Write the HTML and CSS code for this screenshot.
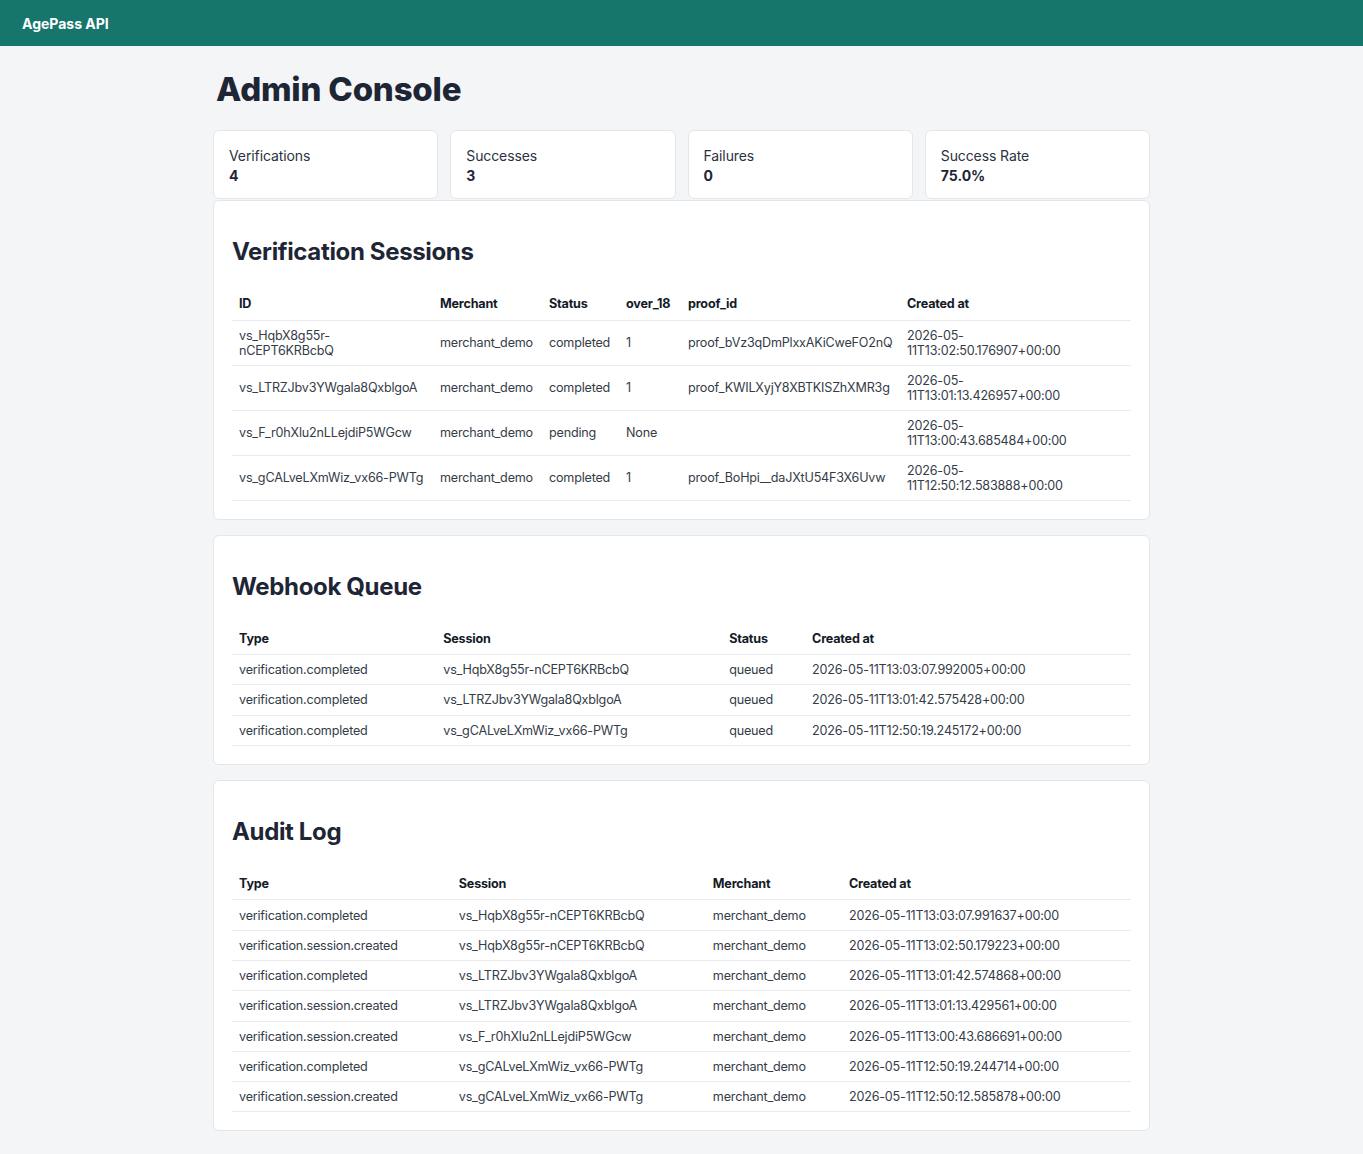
FILE: index.html
```html
<!DOCTYPE html>
<html lang="en">
<head>
<meta charset="utf-8">
<title>AgePass Admin Console</title>
<link rel="stylesheet" href="styles.css">
</head>
<body>
<header class="topbar"><span class="brand">AgePass API</span></header>
<main class="container">
  <h1 class="page-title">Admin Console</h1>
  <div class="stats">
    <div class="stat"><div class="stat-label">Verifications</div><div class="stat-value">4</div></div>
    <div class="stat"><div class="stat-label">Successes</div><div class="stat-value">3</div></div>
    <div class="stat"><div class="stat-label">Failures</div><div class="stat-value">0</div></div>
    <div class="stat"><div class="stat-label">Success Rate</div><div class="stat-value">75.0%</div></div>
  </div>

  <section class="panel panel-first">
    <h2>Verification Sessions</h2>
    <table class="data sessions">
      <colgroup>
        <col class="c-id"><col class="c-merchant"><col class="c-status"><col class="c-over"><col class="c-proof"><col>
      </colgroup>
      <thead><tr><th>ID</th><th>Merchant</th><th>Status</th><th>over_18</th><th>proof_id</th><th>Created at</th></tr></thead>
      <tbody>
        <tr><td>vs_HqbX8g55r-<br>nCEPT6KRBcbQ</td><td>merchant_demo</td><td>completed</td><td>1</td><td>proof_bVz3qDmPlxxAKiCweFO2nQ</td><td class="w-date">2026-05-11T13:02:50.176907+00:00</td></tr>
        <tr><td>vs_LTRZJbv3YWgala8QxblgoA</td><td>merchant_demo</td><td>completed</td><td>1</td><td>proof_KWILXyjY8XBTKISZhXMR3g</td><td class="w-date">2026-05-11T13:01:13.426957+00:00</td></tr>
        <tr><td>vs_F_r0hXlu2nLLejdiP5WGcw</td><td>merchant_demo</td><td>pending</td><td>None</td><td></td><td class="w-date">2026-05-11T13:00:43.685484+00:00</td></tr>
        <tr><td>vs_gCALveLXmWiz_vx66-PWTg</td><td>merchant_demo</td><td>completed</td><td>1</td><td>proof_BoHpi__daJXtU54F3X6Uvw</td><td class="w-date">2026-05-11T12:50:12.583888+00:00</td></tr>
      </tbody>
    </table>
  </section>

  <section class="panel">
    <h2>Webhook Queue</h2>
    <table class="data">
      <thead><tr><th>Type</th><th>Session</th><th>Status</th><th>Created at</th></tr></thead>
      <tbody>
        <tr><td>verification.completed</td><td>vs_HqbX8g55r-nCEPT6KRBcbQ</td><td>queued</td><td>2026-05-11T13:03:07.992005+00:00</td></tr>
        <tr><td>verification.completed</td><td>vs_LTRZJbv3YWgala8QxblgoA</td><td>queued</td><td>2026-05-11T13:01:42.575428+00:00</td></tr>
        <tr><td>verification.completed</td><td>vs_gCALveLXmWiz_vx66-PWTg</td><td>queued</td><td>2026-05-11T12:50:19.245172+00:00</td></tr>
      </tbody>
    </table>
  </section>

  <section class="panel">
    <h2>Audit Log</h2>
    <table class="data">
      <thead><tr><th>Type</th><th>Session</th><th>Merchant</th><th>Created at</th></tr></thead>
      <tbody>
        <tr><td>verification.completed</td><td>vs_HqbX8g55r-nCEPT6KRBcbQ</td><td>merchant_demo</td><td>2026-05-11T13:03:07.991637+00:00</td></tr>
        <tr><td>verification.session.created</td><td>vs_HqbX8g55r-nCEPT6KRBcbQ</td><td>merchant_demo</td><td>2026-05-11T13:02:50.179223+00:00</td></tr>
        <tr><td>verification.completed</td><td>vs_LTRZJbv3YWgala8QxblgoA</td><td>merchant_demo</td><td>2026-05-11T13:01:42.574868+00:00</td></tr>
        <tr><td>verification.session.created</td><td>vs_LTRZJbv3YWgala8QxblgoA</td><td>merchant_demo</td><td>2026-05-11T13:01:13.429561+00:00</td></tr>
        <tr><td>verification.session.created</td><td>vs_F_r0hXlu2nLLejdiP5WGcw</td><td>merchant_demo</td><td>2026-05-11T13:00:43.686691+00:00</td></tr>
        <tr><td>verification.completed</td><td>vs_gCALveLXmWiz_vx66-PWTg</td><td>merchant_demo</td><td>2026-05-11T12:50:19.244714+00:00</td></tr>
        <tr><td>verification.session.created</td><td>vs_gCALveLXmWiz_vx66-PWTg</td><td>merchant_demo</td><td>2026-05-11T12:50:12.585878+00:00</td></tr>
      </tbody>
    </table>
  </section>
</main>
</body>
</html>
```

FILE: styles.css
```css
* { box-sizing: border-box; }

html, body {
  margin: 0;
  padding: 0;
}

body {
  font-family: Inter, "Noto Sans", "Liberation Sans", sans-serif;
  background: #f4f5f7;
  color: #1f2937;
}

.topbar {
  height: 46px;
  background: #17766b;
  display: flex;
  align-items: center;
  padding: 0 22px;
}

.brand {
  color: #ffffff;
  font-weight: 700;
  font-size: 14px;
}

.container {
  width: 937px;
  margin: 0 auto;
  padding: 24px 0 22px;
}

.page-title {
  margin: 0 0 21px 3px;
  font-size: 33px;
  line-height: 39px;
  font-weight: 800;
  color: #1e2635;
  letter-spacing: -0.2px;
}

.stats {
  display: grid;
  grid-template-columns: repeat(4, 1fr);
  gap: 12px;
}

.stat {
  background: #ffffff;
  border: 1px solid #e3e6ea;
  border-radius: 6px;
  height: 69px;
  padding: 15px 15px;
}

.stat-label {
  font-size: 14px;
  line-height: 20px;
  color: #2b3340;
  letter-spacing: -0.1px;
}

.stat-value {
  font-size: 14px;
  line-height: 20px;
  font-weight: 700;
  color: #1e2635;
}

.panel {
  background: #ffffff;
  border: 1px solid #e3e6ea;
  border-radius: 6px;
  padding: 18px 18px 18px;
  margin-top: 15px;
}

.panel-first {
  margin-top: 1px;
}

.panel h2 {
  margin: 19px 0 21px;
  font-size: 24px;
  line-height: 28px;
  font-weight: 700;
  color: #1e2635;
  letter-spacing: -0.35px;
}

.data {
  width: 100%;
  border-collapse: collapse;
  font-size: 12.6px;
  letter-spacing: -0.2px;
}

.sessions {
  table-layout: fixed;
}

.c-id { width: 201px; }
.c-merchant { width: 109px; }
.c-status { width: 77px; }
.c-over { width: 62px; }
.c-proof { width: 219px; }

.data th {
  text-align: left;
  font-weight: 700;
  color: #141b27;
  padding: 9px 7px 7px;
  height: 33px;
  line-height: 16px;
  border-bottom: 1px solid #e8eaed;
}

.data td {
  color: #343c48;
  padding: 7px 7px;
  line-height: 15px;
  height: 30.3px;
  border-bottom: 1px solid #e8eaed;
  vertical-align: middle;
}

.sessions td {
  height: 45px;
}

.sessions td.w-date {
  padding-right: 30px;
}
```
